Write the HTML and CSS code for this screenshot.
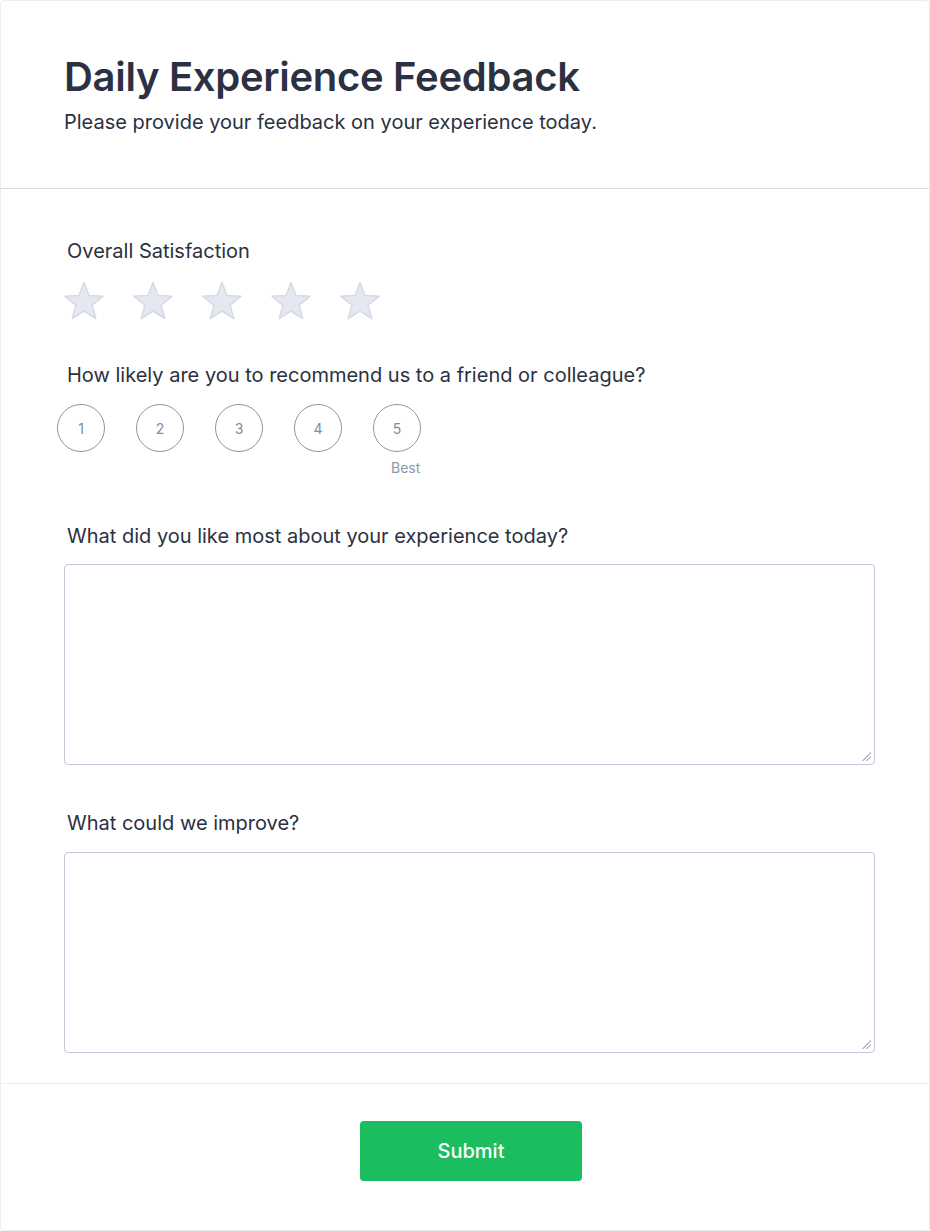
FILE: index.html
```html
<!DOCTYPE html>
<html lang="en">
<head>
<meta charset="utf-8">
<title>Daily Experience Feedback</title>
<link rel="stylesheet" href="styles.css">
</head>
<body>
<div class="card">
  <header class="header">
    <h1 class="title">Daily Experience Feedback</h1>
    <p class="subtitle">Please provide your feedback on your experience today.</p>
  </header>
  <main class="body">
    <section class="field field-stars">
      <label class="label">Overall Satisfaction</label>
      <div class="stars">
        <svg class="star" viewBox="0 0 40 40"><path d="M20 1.5 L25 14.6 L39 15.3 L28.1 24.1 L31.8 37.7 L20 30 L8.2 37.7 L11.9 24.1 L1 15.3 L15 14.6 Z"/></svg>
        <svg class="star" viewBox="0 0 40 40"><path d="M20 1.5 L25 14.6 L39 15.3 L28.1 24.1 L31.8 37.7 L20 30 L8.2 37.7 L11.9 24.1 L1 15.3 L15 14.6 Z"/></svg>
        <svg class="star" viewBox="0 0 40 40"><path d="M20 1.5 L25 14.6 L39 15.3 L28.1 24.1 L31.8 37.7 L20 30 L8.2 37.7 L11.9 24.1 L1 15.3 L15 14.6 Z"/></svg>
        <svg class="star" viewBox="0 0 40 40"><path d="M20 1.5 L25 14.6 L39 15.3 L28.1 24.1 L31.8 37.7 L20 30 L8.2 37.7 L11.9 24.1 L1 15.3 L15 14.6 Z"/></svg>
        <svg class="star" viewBox="0 0 40 40"><path d="M20 1.5 L25 14.6 L39 15.3 L28.1 24.1 L31.8 37.7 L20 30 L8.2 37.7 L11.9 24.1 L1 15.3 L15 14.6 Z"/></svg>
      </div>
    </section>
    <section class="field field-scale">
      <label class="label">How likely are you to recommend us to a friend or colleague?</label>
      <div class="scale">
        <div class="scale-item"><span class="circle">1</span></div>
        <div class="scale-item"><span class="circle">2</span></div>
        <div class="scale-item"><span class="circle">3</span></div>
        <div class="scale-item"><span class="circle">4</span></div>
        <div class="scale-item"><span class="circle">5</span><span class="hint">Best</span></div>
      </div>
    </section>
    <section class="field field-text field-first">
      <label class="label">What did you like most about your experience today?</label>
      <div class="textarea-wrap"><textarea class="textarea"></textarea></div>
    </section>
    <section class="field field-text field-second">
      <label class="label">What could we improve?</label>
      <div class="textarea-wrap"><textarea class="textarea"></textarea></div>
    </section>
  </main>
  <footer class="footer">
    <button class="submit" type="button">Submit</button>
  </footer>
</div>
</body>
</html>
```
FILE: styles.css
```css
* { box-sizing: border-box; }
html, body { margin: 0; padding: 0; background: #ffffff; }
body { font-family: Inter, "Noto Sans", "Liberation Sans", sans-serif; color: #2b3142; }

.card {
  width: 930px;
  min-height: 1231px;
  border: 1px solid #eceef3;
  border-radius: 4px;
  background: #fff;
  display: flex;
  flex-direction: column;
}

.header {
  padding: 52px 63px 54px;
  border-bottom: 1px solid #d8dbe6;
}
.title {
  margin: 0;
  font-size: 40px;
  line-height: 48px;
  font-weight: 600;
  letter-spacing: -0.3px;
  color: #2b3142;
}
.subtitle {
  margin: 9px 0 0;
  font-size: 20px;
  line-height: 24px;
  font-weight: 400;
  color: #2b3142;
}

.body {
  padding: 50px 54px 30px 63px;
  border-bottom: 1px solid #eceef3;
  display: flex;
  flex-direction: column;
}
.field { display: flex; flex-direction: column; }
.label {
  display: block;
  padding-left: 3px;
  font-size: 20px;
  line-height: 24px;
  font-weight: 400;
  color: #2b3142;
}

.stars { display: flex; gap: 29px; margin-top: 18px; padding-left: 0; }
.star { width: 40px; height: 40px; display: block; overflow: visible; }
.star path { fill: #e5e8f0; stroke: #d6dae5; stroke-width: 1.5; stroke-linejoin: round; }

.field-scale { margin-top: 42px; }
.scale { display: flex; gap: 31px; margin-top: 17px; margin-left: -7px; }
.scale-item { position: relative; width: 48px; height: 48px; }
.circle {
  display: flex;
  align-items: center;
  justify-content: center;
  width: 48px;
  height: 48px;
  border: 1px solid #8e96ab;
  border-radius: 50%;
  font-size: 14px;
  font-weight: 400;
  color: #7f8ca2;
}
.hint {
  position: absolute;
  left: 18px;
  top: 55px;
  font-size: 14px;
  line-height: 18px;
  color: #8a9aab;
}

.field-first { margin-top: 72px; }
.field-second { margin-top: 46px; }
.textarea-wrap { position: relative; margin-top: 16px; width: 811px; }
.field-second .textarea-wrap { margin-top: 17px; }
.textarea {
  display: block;
  width: 811px;
  height: 201px;
  border: 1px solid #c4c7d8;
  border-radius: 4px;
  background: #fff;
  font-family: inherit;
  font-size: 16px;
  padding: 10px;
  resize: none;
}
.textarea-wrap::after {
  content: "";
  position: absolute;
  right: 4px;
  bottom: 4px;
  width: 9px;
  height: 9px;
  background: linear-gradient(135deg, transparent 0 46%, #b9bdcc 46% 56%, transparent 56% 70%, #b9bdcc 70% 80%, transparent 80%);
  pointer-events: none;
}

.footer {
  flex: 1;
  display: flex;
  justify-content: center;
  padding-top: 37px;
  padding-left: 12px;
}
.submit {
  width: 222px;
  height: 60px;
  border: none;
  border-radius: 4px;
  background: #1abe5e;
  color: #ffffff;
  font-family: inherit;
  font-size: 20px;
  font-weight: 500;
}
```
